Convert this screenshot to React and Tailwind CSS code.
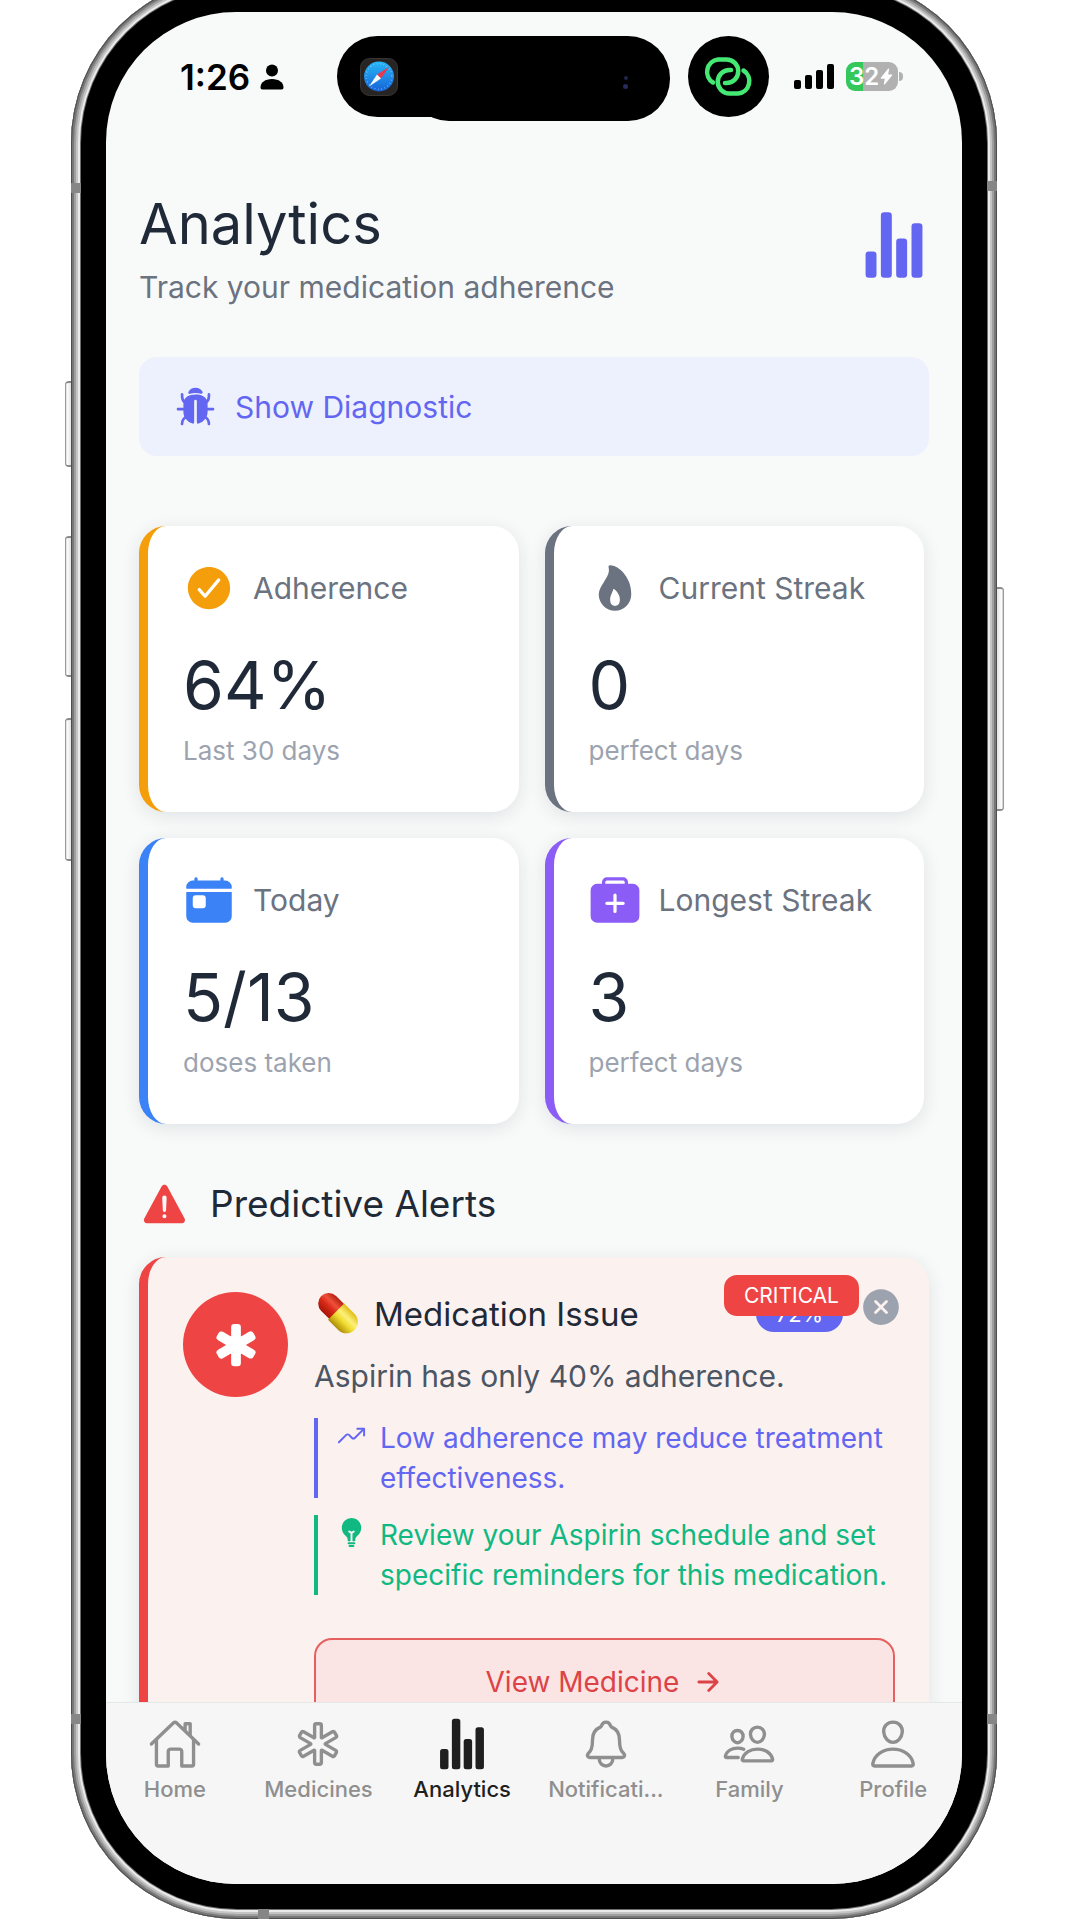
import React from "react";
import {
  IoStatsChart,
  IoBug,
  IoCheckmarkCircle,
  IoFlame,
  IoToday,
  IoMedkit,
  IoWarning,
  IoMedical,
  IoMedicalOutline,
  IoTrendingUpOutline,
  IoBulb,
  IoCloseCircle,
  IoArrowForward,
  IoHomeOutline,
  IoNotificationsOutline,
  IoPeopleOutline,
  IoPersonOutline,
  IoFlash,
} from "react-icons/io5";

const stats = [
  { label: "Adherence", value: "64%", note: "Last 30 days", Icon: IoCheckmarkCircle, border: "border-[#f59e0b]", tint: "text-[#f59e0b]" },
  { label: "Current Streak", value: "0", note: "perfect days", Icon: IoFlame, border: "border-[#6b7280]", tint: "text-[#6b7280]" },
  { label: "Today", value: "5/13", note: "doses taken", Icon: IoToday, border: "border-[#3b82f6]", tint: "text-[#3b82f6]" },
  { label: "Longest Streak", value: "3", note: "perfect days", Icon: IoMedkit, border: "border-[#8b5cf6]", tint: "text-[#8b5cf6]" },
];

const tabs = [
  { label: "Home", Icon: IoHomeOutline },
  { label: "Medicines", Icon: IoMedicalOutline },
  { label: "Analytics", Icon: IoStatsChart, active: true },
  { label: "Notificati...", Icon: IoNotificationsOutline },
  { label: "Family", Icon: IoPeopleOutline },
  { label: "Profile", Icon: IoPersonOutline },
];

function SafariIcon() {
  return (
    <svg viewBox="0 0 38 38" className="size-[38px]" aria-hidden="true">
      <defs>
        <linearGradient id="sea" x1="0" y1="0" x2="0" y2="1">
          <stop offset="0" stopColor="#27b7f7" />
          <stop offset="1" stopColor="#1763d8" />
        </linearGradient>
      </defs>
      <rect x="0.5" y="0.5" width="37" height="37" rx="9" fill="#262524" stroke="#3a3530" />
      <circle cx="19" cy="18.5" r="15" fill="url(#sea)" />
      <circle cx="19" cy="18.5" r="12.8" fill="none" stroke="#9fd8ff" strokeWidth="1.2" strokeDasharray="0.6 2.8" />
      <path d="M29 9 L21 20.5 L17 16.5 Z" fill="#e8384a" />
      <path d="M9 28.500 L21 20.5 L17 16.5 Z" fill="#f4f8fb" />
    </svg>
  );
}

function LinkIcon() {
  return (
    <svg viewBox="0 0 81 81" className="size-full" fill="none" stroke="#45e873" strokeWidth="4.500" strokeLinecap="round" aria-hidden="true">
      <path d="M25 46.500 A12.500 12.500 0 0 1 30 23.500 H38.500 A11.750 11.750 0 0 1 38.500 47 H37" />
      <path d="M55.500 34.500 A12.500 12.500 0 0 1 50 57.500 H41.500 A11.750 11.750 0 0 1 41.500 34 H43" />
    </svg>
  );
}

function PersonGlyph() {
  return (
    <svg viewBox="0 0 24 26" className="h-[26px] w-[24px]" aria-hidden="true">
      <circle cx="12" cy="6.500" r="6" />
      <path d="M0.500 23.500 C0.500 18.500 5 15 12 15 C19 15 23.500 18.500 23.500 23.500 C23.500 24.800 22.800 25.500 21.500 25.500 H2.500 C1.200 25.500 0.500 24.800 0.500 23.500 Z" />
    </svg>
  );
}

function SignalIcon() {
  return (
    <svg viewBox="0 0 40 26" className="h-[26px] w-[40px]" aria-hidden="true">
      <rect x="0" y="16" width="7" height="9" rx="2" />
      <rect x="11" y="11" width="7" height="14" rx="2" />
      <rect x="22" y="6" width="7" height="19" rx="2" />
      <rect x="33" y="0" width="7" height="25" rx="2" />
    </svg>
  );
}

function PillIcon() {
  return (
    <svg viewBox="0 0 46 44" className="h-[44px] w-[46px]" aria-hidden="true">
      <defs>
        <linearGradient id="capRed" x1="0" y1="0" x2="0" y2="1">
          <stop offset="0" stopColor="#b3200f" />
          <stop offset="0.35" stopColor="#f0503a" />
          <stop offset="0.6" stopColor="#d92a18" />
          <stop offset="1" stopColor="#a51508" />
        </linearGradient>
        <linearGradient id="capYellow" x1="0" y1="0" x2="0" y2="1">
          <stop offset="0" stopColor="#e0bd16" />
          <stop offset="0.35" stopColor="#fdf07a" />
          <stop offset="0.6" stopColor="#f0dc30" />
          <stop offset="1" stopColor="#ad8c08" />
        </linearGradient>
      </defs>
      <g transform="rotate(45 23.500 21)">
        <path d="M23.500 10 H10.500 A10.500 10.500 0 0 0 10.500 31 H23.500 Z" fill="url(#capRed)" />
        <path d="M21.500 9.500 H36 A11.500 11.500 0 0 1 36 32.500 H21.500 Z" fill="url(#capYellow)" />
      </g>
    </svg>
  );
}

function StatusBar() {
  return (
    <div className="flex h-[109px] shrink-0 items-start pt-[24px]">
      <div className="flex h-[81px] min-w-0 flex-1 items-center gap-[10px] pl-[74px] text-black">
        <span className="text-[35px] leading-[40px] font-semibold">1:26</span>
        <PersonGlyph />
      </div>
      <div className="relative h-[85px] w-[333px]">
        <div className="absolute top-0 left-0 h-[81px] w-[200px] rounded-[41px] bg-black" />
        <div className="absolute top-0 right-0 h-[85px] w-[263px] rounded-[42px] bg-black" />
        <div className="relative flex h-[81px] items-center justify-between pr-[42px] pl-[23px]">
          <SafariIcon />
          <div className="mt-[11px] flex flex-col items-center gap-1">
            <span className="size-1 rounded-full bg-[#23254f]" />
            <span className="size-[5px] rounded-full bg-[#262a5e]" />
          </div>
        </div>
      </div>
      <div className="ml-[18px] size-[81px] rounded-full bg-black">
        <LinkIcon />
      </div>
      <div className="flex h-[81px] w-[193px] items-center gap-3 pl-[25px]">
        <SignalIcon />
        <div className="flex items-center gap-px">
          <div className="flex h-[29px] w-[52px] items-center justify-center rounded-[9px] bg-linear-to-r from-[#34c759] from-33% to-[#b1b1b1] to-33% text-white">
            <span className="text-[24px] leading-[28px] font-semibold">32</span>
            <IoFlash className="-ml-px size-[17px]" aria-hidden="true" />
          </div>
          <span className="h-[9px] w-1 rounded-r-full bg-[#b1b1b1]" />
        </div>
      </div>
    </div>
  );
}

function StatCard({ label, value, note, Icon, border, tint }) {
  return (
    <section className={`min-w-0 rounded-[27px] border-l-[9px] bg-white pt-[36px] pr-3 pb-[45px] pl-[35px] shadow-[0_4px_18px_rgba(30,40,60,0.11)] ${border}`}>
      <div className="flex items-center gap-[18px]">
        <Icon className={`size-[52px] shrink-0 ${tint}`} aria-hidden="true" />
        <h2 className="text-[30px] leading-[36px] whitespace-nowrap text-[#6b7280]">{label}</h2>
      </div>
      <p className="mt-[35px] text-[66px] leading-[72px] text-[#1f2937]">{value}</p>
      <p className="mt-[14px] text-[26px] leading-[32px] text-[#9ca3af]">{note}</p>
    </section>
  );
}

function Insight({ Icon, tone, children }) {
  return (
    <div className={`flex gap-[13px] border-l-[4px] pl-[18px] ${tone}`}>
      <Icon className="mt-[2px] size-[31px] shrink-0" aria-hidden="true" />
      <p className="text-[28px] leading-[40px]">{children}</p>
    </div>
  );
}

function AlertCard() {
  return (
    <article className="relative mt-[29px] flex gap-[26px] rounded-[27px] border-l-[9px] border-[#ef4444] bg-[#fbf1ef] pt-[35px] pr-[34px] pb-[35px] pl-[35px] shadow-[0_4px_18px_rgba(30,40,60,0.11)]">
      <div className="flex size-[105px] shrink-0 items-center justify-center rounded-full bg-[#ef4444] text-white">
        <IoMedical className="size-[52px]" aria-hidden="true" />
      </div>
      <div className="min-w-0 flex-1">
        <div className="flex h-[44px] items-center gap-[14px]">
          <PillIcon />
          <h3 className="text-[33px] leading-[40px] whitespace-nowrap text-[#1f2937]">Medication Issue</h3>
          <span className="mr-[52px] ml-auto flex h-[36px] w-[87px] items-center justify-center rounded-[18px] bg-[#6366f1] text-[22px] text-white">72%</span>
        </div>
        <p className="mt-[20px] text-[30px] leading-[40px] whitespace-nowrap text-[#4b5563]">Aspirin has only 40% adherence.</p>
        <div className="mt-[22px] flex flex-col gap-[17px]">
          <Insight Icon={IoTrendingUpOutline} tone="border-[#6366f1] text-[#6366f1]">
            Low adherence may reduce treatment effectiveness.
          </Insight>
          <Insight Icon={IoBulb} tone="border-[#10b981] text-[#10b981]">
            Review your Aspirin schedule and set specific reminders for this medication.
          </Insight>
        </div>
        <button type="button" className="mt-[43px] flex w-full items-center justify-center gap-[14px] rounded-[18px] border-2 border-[#e5605f] bg-[#fbe5e4] py-[22px] text-[#dc4347]">
          <span className="text-[28px] leading-[40px]">View Medicine</span>
          <IoArrowForward className="size-[30px]" aria-hidden="true" />
        </button>
      </div>
      <span className="absolute top-[18px] right-[70px] flex h-[41px] w-[135px] items-center justify-center rounded-[13px] bg-[#ef4444] text-[21px] text-white">CRITICAL</span>
      <button type="button" aria-label="Dismiss alert" className="absolute top-[28px] right-[26px] text-[#9ca3af]">
        <IoCloseCircle className="size-[44px]" aria-hidden="true" />
      </button>
    </article>
  );
}

function TabBar() {
  return (
    <nav className="h-[182px] shrink-0 border-t border-[#e6e8e8] bg-[#f6f6f6] pt-[14px]">
      <div className="-mx-[3px] grid grid-cols-6 items-start">
        {tabs.map(({ label, Icon, active }) => (
          <a
            key={label}
            href="#"
            aria-current={active ? "page" : undefined}
            className={`flex flex-col items-center gap-[4px] ${active ? "text-[#1f1f1f]" : "text-[#8f8f8f]"}`}
          >
            <Icon className="size-[54px]" aria-hidden="true" />
            <span className="text-[22px] leading-[28px] font-medium whitespace-nowrap">{label}</span>
          </a>
        ))}
      </div>
    </nav>
  );
}

const sideButton = "w-full border-y-2 border-[#8a8a8a] bg-linear-to-r from-[#9a9a9a] from-10% via-white via-30% to-[#e4e4e4]";

export default function App() {
  return (
    <div className="flex h-screen items-stretch overflow-hidden bg-white pr-[76px] pb-px pl-[65px] font-[Inter,sans-serif]">
      <div className="w-[6px] shrink-0 pt-[381px]">
        <div className={`h-[86px] rounded-l-[4px] ${sideButton}`} />
        <div className={`mt-[69px] h-[141px] rounded-l-[4px] ${sideButton}`} />
        <div className={`mt-[41px] h-[143px] rounded-l-[4px] ${sideButton}`} />
      </div>

      <div className="relative -mt-[23px] min-w-0 flex-1 rounded-[166px] bg-black p-[35px] shadow-[inset_0_0_0_1px_#4e4e4e,inset_0_0_0_3px_#777777,inset_0_0_0_5px_#a0a0a0,inset_0_0_0_7px_#c4c4c4,inset_0_0_0_9px_#eaeaea,inset_0_0_0_10px_#6c6c6c]">
        <span className="absolute top-[206px] left-0 h-[10px] w-[10px] bg-[#868686]" />
        <span className="absolute top-[204px] right-0 h-[10px] w-[10px] bg-[#868686]" />
        <span className="absolute bottom-[195px] left-0 h-[10px] w-[10px] bg-[#868686]" />
        <span className="absolute right-0 bottom-[195px] h-[10px] w-[10px] bg-[#868686]" />
        <span className="absolute bottom-0 left-[187px] h-[10px] w-[11px] bg-[#868686]" />

        <div className="flex h-full flex-col overflow-hidden rounded-[130px] bg-[#f8faf9]">
          <StatusBar />

          <main className="min-h-0 flex-1 overflow-x-hidden overflow-y-auto pt-[71px] pr-[33px] pb-[32px] pl-[33px] [scrollbar-width:none]">
            <header className="flex items-start justify-between">
              <div>
                <h1 className="text-[56px] leading-[64px] text-[#1f2937]">Analytics</h1>
                <p className="mt-[13px] text-[30px] leading-[36px] text-[#6b7280]">Track your medication adherence</p>
              </div>
              <IoStatsChart className="mt-[18px] size-[70px] text-[#6366f1]" aria-hidden="true" />
            </header>

            <button type="button" className="mt-[52px] flex h-[99px] w-full items-center gap-[18px] rounded-[18px] bg-[#edf1fd] pl-[35px] text-[#6366f1]">
              <IoBug className="size-[43px]" aria-hidden="true" />
              <span className="text-[30px] leading-[36px]">Show Diagnostic</span>
            </button>

            <div className="mt-[70px] mr-[5px] grid grid-cols-2 gap-[26px]">
              {stats.map((s) => (
                <StatCard key={s.label} {...s} />
              ))}
            </div>

            <div className="mt-[56px] flex h-[48px] items-center gap-[19px]">
              <IoWarning className="size-[52px] text-[#ef4444]" aria-hidden="true" />
              <h2 className="text-[37px] leading-[40px] text-[#1f2937]">Predictive Alerts</h2>
            </div>

            <AlertCard />
          </main>

          <TabBar />
        </div>
      </div>

      <div className="w-[7px] shrink-0 pt-[587px]">
        <div className="h-[224px] w-full rounded-r-[4px] border-y-2 border-[#8a8a8a] bg-linear-to-r from-[#e4e4e4] via-white via-70% to-[#9a9a9a] to-90%" />
      </div>
    </div>
  );
}
